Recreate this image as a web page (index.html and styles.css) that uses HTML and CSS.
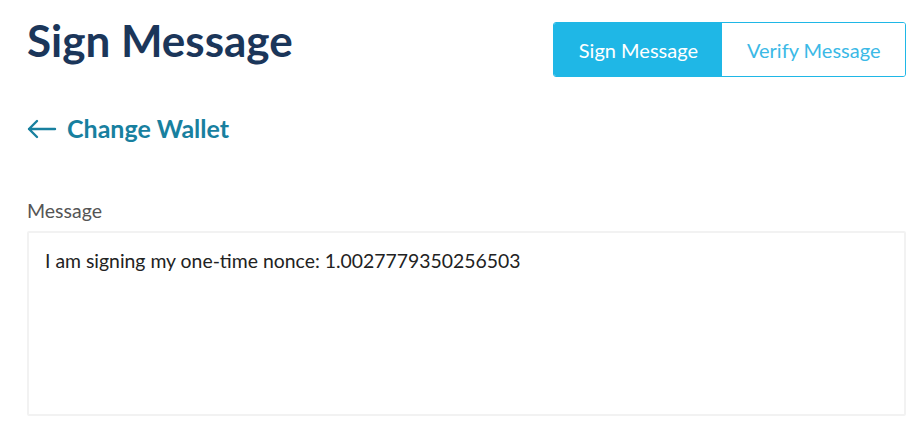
FILE: index.html
```html
<!DOCTYPE html>
<html lang="en">
<head>
  <meta charset="utf-8"/>
  <meta name="viewport" content="width=device-width, initial-scale=1.0"/>
  <title>Sign Message</title>
  <link rel="stylesheet" href="styles.css">
</head>
<body>
  <div class="page">
    <div class="header">
      <h1 class="title">Sign Message</h1>
      <div class="tabs">
        <button class="tab active">Sign Message</button>
        <button class="tab">Verify Message</button>
      </div>
    </div>

    <a class="back" href="#">
      <svg width="30" height="20" viewBox="0 0 30 20" fill="none" stroke="currentColor" stroke-width="2.4" stroke-linecap="round" stroke-linejoin="round">
        <path d="M2 10h26M10 2l-8 8 8 8"/>
      </svg>
      Change Wallet
    </a>

    <label class="field-label" for="msg">Message</label>
    <textarea id="msg" class="message">I am signing my one-time nonce: 1.0027779350256503</textarea>
  </div>
</body>
</html>
```

FILE: styles.css
```css
body { margin:0; background:#fff; font-family:Lato, "Open Sans", sans-serif; }
.page { padding:0 14px 0 27px; }

.header { display:flex; justify-content:space-between; align-items:flex-start; }
.title { margin:0; padding-top:14px; font-size:44px; font-weight:700; color:#1b365a; line-height:52px; }

.tabs { display:flex; margin-top:22px; border:1px solid #1fb7e6; border-radius:3px; overflow:hidden; }
.tab { font-family:Lato, sans-serif; font-size:20px; height:53px; padding:0 24.5px; border:none; background:#fff; color:#3bb9e6; cursor:pointer; }
.tab.active { background:#1fb7e6; color:#fff; }

.back { display:flex; align-items:center; gap:10px; margin-top:35px; color:#18809f; font-size:25px; font-weight:700; text-decoration:none; line-height:32px; }
.back svg { margin-top:1px; }

.field-label { display:block; margin-top:55px; font-size:19.5px; color:#555; line-height:24px; }
.message { display:block; box-sizing:border-box; width:100%; height:185px; margin-top:8px; padding:16px 16px; border:2px solid #f2f2f2; border-radius:2px; font-family:Lato, sans-serif; font-size:19.4px; color:#222; resize:none; outline:none; }
```
